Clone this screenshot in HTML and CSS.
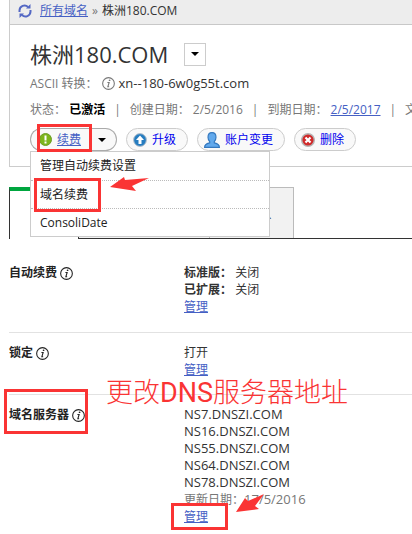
FILE: index.html
```html
<!DOCTYPE html>
<html lang="zh-CN">
<head>
<meta charset="UTF-8">
<meta name="viewport" content="width=device-width, initial-scale=1.0">
<title>株洲180.COM</title>
<link rel="stylesheet" href="styles.css">
</head>
<body>

<svg class="defs" width="0" height="0" aria-hidden="true">
    <symbol id="info" viewBox="0 0 12 12">
        <circle cx="6" cy="6" r="5.4" fill="none" stroke="currentColor"/>
        <path d="M5 5h1.6L5.4 9h1.2" fill="none" stroke="currentColor"/>
        <circle cx="7" cy="3" r=".8" fill="currentColor"/>
    </symbol>
    <symbol id="arrow" viewBox="0 0 39 16">
        <path d="M0 10L14 0l1 3 24-2-17 8 4 5z" fill="#fa3434"/>
    </symbol>
</svg>

<div class="page">
    <div class="panel">
        <nav class="crumbs">
            <svg class="refresh" width="14" height="14" viewBox="0 0 14 14">
                <path d="M1.5 8V6.5A5 5 0 0 1 10 3M12.500 6v1.500A5 5 0 0 1 4 11" fill="none" stroke="#5468c4" stroke-width="2"/>
                <path d="M8 4.500h4.500V0zM6 9.500H1.500V14z" fill="#5468c4"/>
            </svg>
            <a href="#">所有域名</a>
            <span class="sep">»</span>
            <span>株洲180.COM</span>
        </nav>

        <div class="summary">
            <div class="title">
                <h1>株洲180.COM</h1>
                <button class="title-menu" type="button" aria-label="域名菜单"><i class="caret"></i></button>
            </div>
            <p class="ascii">ASCII 转换： <svg class="info"><use href="#info"/></svg><span class="latin">xn--180-6w0g55t.com</span></p>
            <ul class="status">
                <li>状态： <b>已激活</b></li>
                <li>创建日期： <span class="latin">2/5/2016</span></li>
                <li>到期日期： <a class="latin" href="#">2/5/2017</a></li>
                <li>文</li>
            </ul>

            <div class="actions">
                <div class="split">
                    <a class="btn renew" href="#">
                        <svg width="13" height="13" viewBox="0 0 13 13">
                            <circle cx="6.500" cy="6.500" r="6" fill="#7db51c" stroke="#6c9c25"/>
                            <path d="M5.500 2.500h2v5h-2zM5.500 8.500h2v2h-2z" fill="#fff"/>
                        </svg>
                        <span>续费</span>
                    </a>
                    <button class="btn more" type="button" aria-label="续费选项"><i class="caret"></i></button>
                    <i class="mark mark-renew"></i>
                    <ul class="menu">
                        <li><a href="#">管理自动续费设置</a></li>
                        <li><a href="#">域名续费</a><i class="mark mark-item"></i><svg class="arrow arrow-item"><use href="#arrow"/></svg></li>
                        <li><a href="#">ConsoliDate</a></li>
                    </ul>
                </div>
                <button class="btn pill" type="button">
                    <svg width="14" height="14" viewBox="0 0 14 14">
                        <circle cx="7" cy="7" r="6.400" fill="#257cc0" stroke="#b5bfca"/>
                        <path d="M7 2.500l4 4.500H8.500v4h-3V7H3z" fill="#fff"/>
                    </svg>
                    升级
                </button>
                <button class="btn pill" type="button">
                    <svg width="16" height="16" viewBox="0 0 14 14">
                        <path d="M7 .5c2.500 0 3.500 1.500 3.500 4 0 1.700-.7 3-1.500 4v1c2 .5 4.500 1 4.500 4H.5c0-3 2.500-3.500 4.500-4v-1c-.8-1-1.500-2.300-1.500-4 0-2.500 1-4 3.500-4z" fill="#62a9ec" stroke="#3478be"/>
                    </svg>
                    账户变更
                </button>
                <button class="btn pill" type="button">
                    <svg width="14" height="14" viewBox="0 0 14 14">
                        <circle cx="7" cy="7" r="6.300" fill="#d02a2a" stroke="#b5b5b5" stroke-width="1.400"/>
                        <path d="M4.500 4.500l5 5m0-5l-5 5" stroke="#fff" stroke-width="2.200"/>
                    </svg>
                    删除
                </button>
            </div>
        </div>
    </div>

    <div class="tabs">
        <div class="tab active"></div>
        <div class="tab wide"></div>
        <a class="tab" href="#">联系人</a>
    </div>

    <dl class="settings">
        <div class="row first">
            <dt>自动续费 <svg class="info"><use href="#info"/></svg></dt>
            <dd>
                <p><b>标准版：</b> 关闭</p>
                <p><b>已扩展：</b> 关闭</p>
                <p><a href="#">管理</a></p>
            </dd>
        </div>
        <div class="row">
            <dt>锁定 <svg class="info"><use href="#info"/></svg></dt>
            <dd>
                <p>打开</p>
                <p><a href="#">管理</a></p>
            </dd>
        </div>
        <div class="row">
            <dt>域名服务器 <svg class="info"><use href="#info"/></svg><i class="mark mark-dns"></i></dt>
            <dd>
                <p class="latin">NS7.DNSZI.COM</p>
                <p class="latin">NS16.DNSZI.COM</p>
                <p class="latin">NS55.DNSZI.COM</p>
                <p class="latin">NS64.DNSZI.COM</p>
                <p class="latin">NS78.DNSZI.COM</p>
                <p class="updated">更新日期：<span class="latin">17/5/2016</span></p>
                <p class="manage"><a href="#">管理</a><i class="mark mark-manage"></i><svg class="arrow arrow-manage" viewBox="0 0 28 20"><path d="M0 18L9 4l3 3L28 0 19 12l4 3z" fill="#fa3434"/></svg></p>
            </dd>
            <div class="note">更改<span>DNS</span>服务器地址</div>
        </div>
    </dl>
</div>

</body>
</html>
```

FILE: styles.css
```css
* {
    box-sizing: border-box;
}
body {
    margin: 0;
    overflow: hidden;
    background: #fff;
    color: #333;
    font: 12px/17px "Open Sans", "Noto Sans CJK SC", sans-serif;
}
h1, p, ul, dl, dd {
    margin: 0;
    padding: 0;
}
ul {
    list-style: none;
}
a {
    color: #4560c4;
}
svg {
    flex: none;
}
.defs {
    position: absolute;
}
.latin {
    font-size: 13px;
}
.page {
    padding-left: 9px;
}
.panel {
    border: 1px solid #ccc;
    border-width: 0 0 1px 1px;
}
.crumbs {
    display: flex;
    align-items: center;
    gap: 4px;
    height: 25px;
    padding: 0 8px 3px;
    background: #ededed;
    border-bottom: 1px solid #c8c8c8;
}
.refresh {
    margin-right: 4px;
}
.sep {
    color: #777;
}
.summary {
    padding: 12px 0 15px 20px;
    white-space: nowrap;
}
.title {
    display: flex;
    align-items: center;
    gap: 16px;
    height: 34px;
}
h1 {
    font-size: 22px;
    font-weight: 400;
    line-height: 34px;
}
.title-menu {
    display: flex;
    align-items: center;
    justify-content: center;
    width: 22px;
    height: 23px;
    padding: 0;
    background: #fff;
    border: 1px solid #ccc;
}
.caret {
    border: 4px solid transparent;
    border-top-color: #000;
    border-bottom: 0;
}
.info {
    width: 13px;
    height: 13px;
    vertical-align: -3px;
}
.ascii {
    display: flex;
    align-items: center;
    gap: 4px;
    height: 24px;
    color: #777;
}
.ascii .latin {
    color: #333;
}
.status {
    display: flex;
    height: 33px;
    padding-top: 6px;
    color: #777;
}
.status .latin {
    font-size: 12px;
}
.status li + li::before {
    content: "|";
    margin: 0 9px;
}
.status b {
    color: #000;
}
.actions {
    display: flex;
    gap: 9px;
}
.split {
    position: relative;
    display: flex;
}
.btn {
    display: flex;
    align-items: center;
    gap: 5px;
    height: 23px;
    padding: 0 11px 0 8px;
    background: #f9f9f9;
    border: 1px solid #ccc;
    border-radius: 12px;
    color: #00e;
    font: inherit;
}
.pill {
    padding-left: 6px;
}
.renew {
    width: 61px;
    border-right: 0;
    border-radius: 12px 0 0 12px;
    border-color: #aaa;
    color: #4560c4;
    text-decoration: none;
}
.renew span {
    text-decoration: underline;
}
.more {
    width: 26px;
    padding: 0 0 0 7px;
    border-left: 0;
    border-radius: 0 12px 12px 0;
    border-color: #aaa;
}
.menu {
    position: absolute;
    z-index: 1;
    top: 23px;
    left: 0;
    width: 240px;
    background: #fff;
    border: 1px solid #ccc;
}
.menu li {
    position: relative;
    height: 28px;
    padding: 5px 9px;
}
.menu li + li {
    border-top: 1px dotted #bbb;
}
.menu a {
    color: #222;
    text-decoration: none;
}

/* red callouts */
.mark {
    position: absolute;
    z-index: 2;
    border: 3px solid #fa3434;
}
.mark-renew {
    top: -4px;
    left: 7px;
    width: 55px;
    height: 28px;
}
.mark-item {
    top: -3px;
    left: 3px;
    width: 67px;
    height: 34px;
}
.mark-dns {
    top: -17px;
    left: -5px;
    width: 84px;
    height: 45px;
}
.mark-manage {
    top: -5px;
    left: -13px;
    width: 57px;
    height: 27px;
}
.arrow {
    position: absolute;
}
.arrow-item {
    top: -4px;
    left: 79px;
    width: 39px;
    height: 16px;
}
.arrow-manage {
    top: -14px;
    left: 52px;
    width: 28px;
    height: 20px;
}
.note {
    position: absolute;
    top: -20px;
    left: 97px;
    color: #fa3434;
    font-size: 27px;
    line-height: 34px;
    font-weight: 300;
    white-space: nowrap;
}
.note span {
    font-family: Roboto, sans-serif;
    font-weight: 400;
}

.tabs {
    display: flex;
    height: 52px;
    margin-top: 20px;
    border-bottom: 1px solid #333;
}
.tab {
    width: 84px;
    padding: 18px 0 0 4px;
    background: #f2f2f2;
    border: 1px solid #bbb;
    border-width: 1px 1px 0 0;
    color: #333;
    text-align: center;
    text-decoration: none;
}
.tab.active {
    width: 70px;
    height: 52px;
    background: #fff;
    border: solid #333;
    border-width: 4px 1px 0;
    border-top-color: #00a63f;
}
.tab.wide {
    width: 131px;
}
.settings {
    padding-top: 14px;
}
.row {
    position: relative;
    display: flex;
    padding: 11px 0 16px;
}
.row + .row {
    border-top: 1px solid #e2e2e2;
}
.row.first {
    padding-bottom: 17px;
}
dt {
    position: relative;
    width: 175px;
    color: #222;
    font-weight: 700;
}
dd p {
    height: 17px;
}
.updated {
    color: #777;
}
.manage {
    position: relative;
}
```
